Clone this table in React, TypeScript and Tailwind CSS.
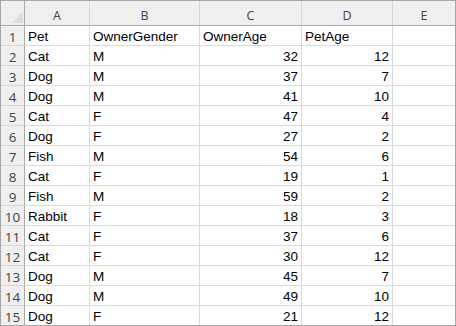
const columns = ['A', 'B', 'C', 'D', 'E'];

const rows: (string | number)[][] = [
  ['Pet', 'OwnerGender', 'OwnerAge', 'PetAge'],
  ['Cat', 'M', 32, 12],
  ['Dog', 'M', 37, 7],
  ['Dog', 'M', 41, 10],
  ['Cat', 'F', 47, 4],
  ['Dog', 'F', 27, 2],
  ['Fish', 'M', 54, 6],
  ['Cat', 'F', 19, 1],
  ['Fish', 'M', 59, 2],
  ['Rabbit', 'F', 18, 3],
  ['Cat', 'F', 37, 6],
  ['Cat', 'F', 30, 12],
  ['Dog', 'M', 45, 7],
  ['Dog', 'M', 49, 10],
  ['Dog', 'F', 21, 12],
];

export default function App() {
  return (
    <div className="w-[456px] h-[326px] bg-white border border-[#a6a6a6] overflow-hidden">
      <div className="grid grid-cols-[24px_65px_110px_102px_91px_62px]">
        {/* Corner */}
        <div className="h-[25px] bg-[#efefef] border-r border-b border-[#ababab] relative">
          <svg className="absolute inset-0" width="23" height="24" viewBox="0 0 23 24">
            <polygon points="22,11 22,22 11,22" fill="#dcdcdc" />
          </svg>
        </div>

        {/* Column headers */}
        {columns.map((c, i) => (
          <div
            key={c}
            className={`h-[25px] bg-[#efefef] border-b border-b-[#ababab] flex items-end justify-center pb-[2px] font-['Open_Sans',sans-serif] text-[12.5px] leading-[14px] text-[#444] ${
              i < columns.length - 1 ? 'border-r border-r-[#d5d5d5]' : ''
            }`}
          >
            {c}
          </div>
        ))}

        {/* Rows */}
        {rows.map((r, ri) => {
          const last = ri === rows.length - 1;
          const rowH = last ? 'h-[19px]' : 'h-[20px] border-b';
          return [
            <div
              key={`h${ri}`}
              className={`${rowH} bg-[#efefef] border-b-[#d5d5d5] border-r border-r-[#ababab] flex items-end justify-center font-['Open_Sans',sans-serif] text-[13.5px] leading-[16px] text-[#444]`}
            >
              {ri + 1}
            </div>,
            ...[0, 1, 2, 3, 4].map((ci) => {
              const v = r[ci];
              const isNum = typeof v === 'number';
              return (
                <div
                  key={`c${ri}-${ci}`}
                  className={`${rowH} border-[#dadada] ${ci < 4 ? 'border-r' : ''} flex items-end px-[3px] font-['Liberation_Sans',Arial,sans-serif] text-[13.5px] leading-[16px] text-black whitespace-nowrap ${
                    isNum ? 'justify-end' : 'justify-start'
                  }`}
                >
                  {v ?? ''}
                </div>
              );
            }),
          ];
        })}
      </div>
    </div>
  );
}
